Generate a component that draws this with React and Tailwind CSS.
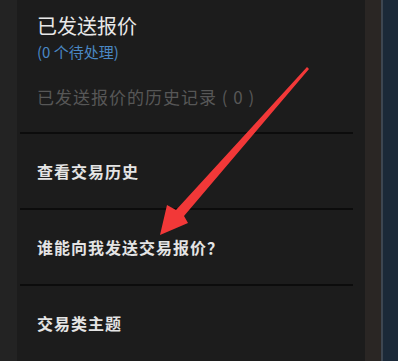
import React from "react";

const font = { fontFamily: '"Noto Sans CJK SC", "Noto Sans", sans-serif' };

function Divider() {
  return <div className="ml-[3px] mr-[12px] h-[2px] bg-[#0c0c0c]" />;
}

function Item({ children }) {
  return (
    <div className="h-[74px] flex items-center pl-[20px] text-[16px] font-bold tracking-[1px] text-[#e4e4e4]">
      {children}
    </div>
  );
}

export default function App() {
  return (
    <div className="relative flex h-[361px] w-[398px] overflow-hidden bg-[#1c1c1c]" style={font}>
      <div className="w-[17px] bg-[#232323]" />
      <div className="w-[348px] bg-[#1c1c1c] flex flex-col">
        <div className="pl-[20px] pt-[13px] pb-[23px]">
          <div className="text-[20px] leading-[26px] text-[#e8e8e8]">已发送报价</div>
          <div className="mt-[3px] text-[15px] leading-[20px] text-[#4a88c4]">(0 个待处理)</div>
          <div className="mt-[23px] text-[17px] leading-[24px] text-[#575757] tracking-[1px]">
            已发送报价的历史记录 ( 0 )
          </div>
        </div>
        <Divider />
        <Item>查看交易历史</Item>
        <Divider />
        <Item>谁能向我发送交易报价？</Item>
        <Divider />
        <Item>交易类主题</Item>
      </div>
      <div className="w-[16px] bg-[#2a2624]" />
      <div className="w-[2px] bg-[#3d4651]" />
      <div className="flex-1 bg-[#1b2938]" />
      <svg className="absolute left-0 top-0 pointer-events-none" width="398" height="361" viewBox="0 0 398 361">
        <polygon
          points="160,235 167,205 176,210 307,67 309,69 184,216 188,223"
          fill="#f23838"
        />
      </svg>
    </div>
  );
}
